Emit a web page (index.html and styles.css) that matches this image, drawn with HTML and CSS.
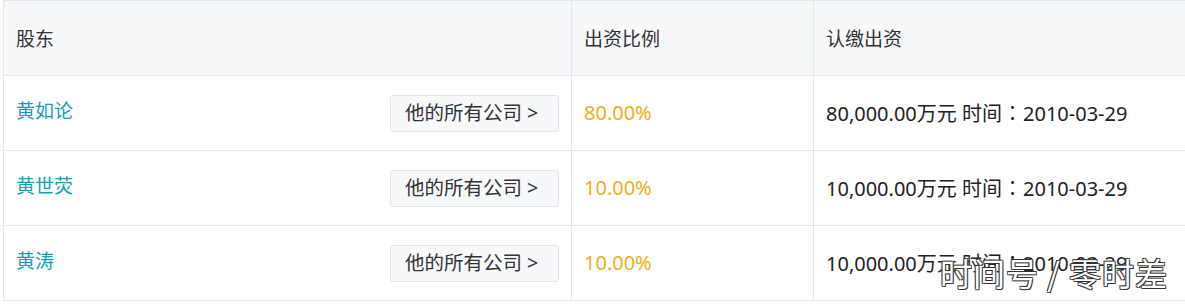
FILE: index.html
```html
<!DOCTYPE html>
<html lang="zh-CN">
<head>
<meta charset="utf-8">
<link rel="stylesheet" href="styles.css">
</head>
<body>
<div class="wrap">
  <table class="grid">
    <colgroup>
      <col class="c1"><col class="c2"><col class="c3">
    </colgroup>
    <thead>
      <tr class="head">
        <th>股东</th>
        <th>出资比例</th>
        <th>认缴出资</th>
      </tr>
    </thead>
    <tbody>
      <tr>
        <td><div class="holder"><a class="name">黄如论</a><span class="btn">他的所有公司 &gt;</span></div></td>
        <td class="pct">80.00%</td>
        <td class="amt">80,000.00万元 时间<span class="colon">：</span>2010-03-29</td>
      </tr>
      <tr>
        <td><div class="holder"><a class="name">黄世荧</a><span class="btn">他的所有公司 &gt;</span></div></td>
        <td class="pct">10.00%</td>
        <td class="amt">10,000.00万元 时间<span class="colon">：</span>2010-03-29</td>
      </tr>
      <tr>
        <td><div class="holder"><a class="name">黄涛</a><span class="btn">他的所有公司 &gt;</span></div></td>
        <td class="pct">10.00%</td>
        <td class="amt">10,000.00万元 时间<span class="colon">：</span>2010-03-29</td>
      </tr>
    </tbody>
  </table>
  <div class="mark">时间号 / 零时差</div>
</div>
</body>
</html>
```
FILE: styles.css
```css
html, body {
  margin: 0;
  padding: 0;
  background: #fff;
  overflow: hidden;
}
body {
  font-family: "Noto Sans", "Noto Sans CJK SC", sans-serif;
  color: #333;
  width: 1185px;
  height: 308px;
}
.wrap {
  position: relative;
  padding-left: 3px;
  width: 1182px;
  overflow: hidden;
}
.grid {
  border-collapse: collapse;
  width: 1200px;
  table-layout: fixed;
  font-size: 19px;
}
.c1 { width: 568px; }
.c2 { width: 242px; }
.c3 { width: 390px; }
.grid th, .grid td {
  border: 1px solid #e4e8eb;
  padding: 0 12px;
  text-align: left;
  font-weight: normal;
  height: 74px;
  line-height: 24px;
  vertical-align: middle;
}
.head th {
  height: 73px;
  background: #f7f8fa;
  color: #333;
  padding-top: 1px;
}
.holder {
  display: flex;
  align-items: center;
  justify-content: space-between;
}
.name {
  color: #1a9cb5;
  margin-top: -5px;
}
.btn {
  display: flex;
  align-items: center;
  box-sizing: border-box;
  height: 37px;
  width: 169px;
  padding-left: 14px;
  border: 1px solid #e1e6ea;
  border-radius: 3px;
  background: #f6f8fa;
  color: #333;
  white-space: nowrap;
  font-size: 19.5px;
}
.pct {
  color: #f0b020;
  font-size: 20px;
}
.amt {
  color: #222;
  font-size: 20px;
}
.colon {
  display: inline-block;
  width: 21px;
  text-align: center;
  font-family: "Noto Sans CJK TC", sans-serif;
}
.mark {
  position: absolute;
  left: 940px;
  top: 252px;
  font-family: "Noto Sans CJK SC", sans-serif;
  font-size: 32px;
  line-height: 40px;
  color: #fff;
  letter-spacing: 1px;
  text-shadow: -1px -1px 0 #333, 1px 1px 0 #333, 1px -1px 0 #555, -1px 1px 0 #555;
}
```
